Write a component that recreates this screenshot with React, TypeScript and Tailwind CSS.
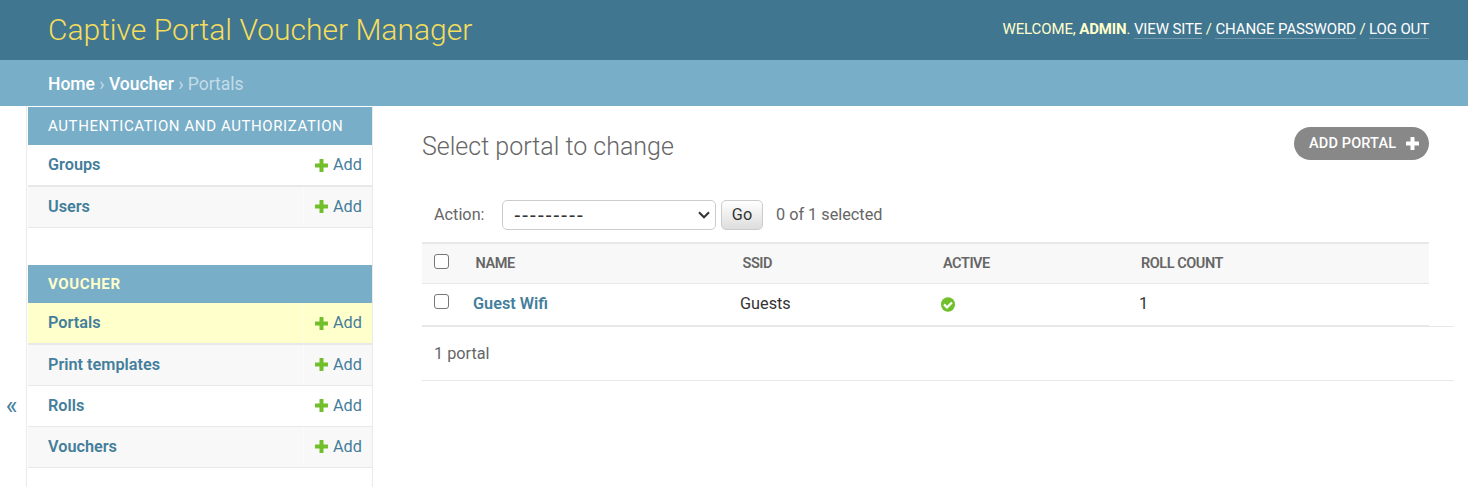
function PlusIcon({ className }: { className: string }) {
  return (
    <svg viewBox="0 0 13 13" className={className} fill="currentColor" aria-hidden="true">
      <path d="M5 0h3a.5.5 0 0 1 .5.500V4.500H12.500a.5.5 0 0 1 .5.500V8a.5.5 0 0 1-.5.500H8.500V12.500a.5.5 0 0 1-.5.500H5a.5.5 0 0 1-.5-.5V8.500H.5A.5.5 0 0 1 0 8V5a.5.5 0 0 1 .5-.5H4.500V.5A.5.5 0 0 1 5 0z" />
    </svg>
  );
}

type Model = { name: string; current?: boolean };

function AppModule({ caption, current, models }: { caption: string; current?: boolean; models: Model[] }) {
  return (
    <section>
      <h2
        className={
          "flex h-[38px] items-center bg-[#79aec8] pl-5 text-[15px] tracking-[0.6px] uppercase " +
          (current ? "font-bold text-[#ffffcc]" : "font-normal text-white")
        }
      >
        {caption}
      </h2>
      <ul>
        {models.map((m, i) => (
          <li
            key={m.name}
            className={
              "flex border-[#e8e8e8] text-[16.25px] text-[#447e9b] " +
              (i === 0 ? "h-[42px] border-b-2 " : "h-[41px] border-b ") +
              (m.current ? "bg-[#ffffcc]" : i % 2 ? "bg-[#f8f8f8]" : "bg-white")
            }
          >
            <a className="flex flex-1 items-center pt-px pl-5 font-semibold">{m.name}</a>
            <a className="flex w-[69px] items-center border-l border-white/40 pt-px pl-[11px]">
              <PlusIcon className={"mr-[5px] h-[13px] w-[13px] text-[#70bf2b] " + (i === 0 ? "-mt-px" : "-mt-[2px]")} />
              Add
            </a>
          </li>
        ))}
      </ul>
    </section>
  );
}

function Checkbox() {
  return <span className="block h-[15px] w-[15px] rounded-[3px] border border-[#767676] bg-white" />;
}

function UserLink({ children }: { children: string }) {
  return <a className="border-b border-white/25 text-white">{children}</a>;
}

export default function App() {
  return (
    <div className="flex h-[487px] w-[1468px] flex-col overflow-hidden bg-white font-['Roboto',sans-serif] text-[#333333]">
      <header className="flex h-[60px] shrink-0 items-center justify-between bg-[#417690] pr-[39px] pl-12">
        <h1 className="text-[30px] leading-[36px] font-light text-[#f5dd5d]">Captive Portal Voucher Manager</h1>
        <div className="pb-px text-[15px] leading-[17px] tracking-[-0.13px] text-[#ffffcc]">
          WELCOME, <strong className="font-bold">ADMIN</strong>. <UserLink>VIEW SITE</UserLink> /{" "}
          <UserLink>CHANGE PASSWORD</UserLink> / <UserLink>LOG OUT</UserLink>
        </div>
      </header>
      <nav className="flex h-[46px] shrink-0 items-center bg-[#79aec8] pt-0.5 pl-12 text-[17.5px] whitespace-pre text-[#c4dce8]">
        <a className="font-medium text-white">Home</a> › <a className="font-medium text-white">Voucher</a> › Portals
      </nav>
      <div className="flex flex-1">
        <button className="flex w-[27px] items-center justify-center border-r border-[#eaeaea] pt-[219px] pr-[3px] text-[25px] text-[#447e9b]">
          «
        </button>
        <aside className="flex w-[346px] flex-col gap-[37px] border-r border-[#eaeaea] pt-px pl-px">
          <AppModule caption="Authentication and Authorization" models={[{ name: "Groups" }, { name: "Users" }]} />
          <AppModule
            caption="Voucher"
            current
            models={[
              { name: "Portals", current: true },
              { name: "Print templates" },
              { name: "Rolls" },
              { name: "Vouchers" },
            ]}
          />
        </aside>
        <main className="flex flex-1 flex-col pl-[49px]">
          <div className="flex justify-between pt-[21px] pr-[39px]">
            <h1 className="pt-[5px] text-[25px] leading-[30px] font-light text-[#666666]">Select portal to change</h1>
            <a className="flex h-[33px] w-[135px] items-center rounded-full bg-[#888888] pl-[15px] text-[14.5px] font-medium tracking-[0.15px] text-white">
              ADD PORTAL
              <PlusIcon className="ml-[10px] h-[13px] w-[13px]" />
            </a>
          </div>
          <div className="mt-[38px] flex h-[31px] items-center pb-px pl-3 text-[16.25px] text-[#666666]">
            <span className="w-[68px] pt-px">Action:</span>
            <div className="flex h-[30px] w-[214px] items-center justify-between rounded-[5px] border border-[#cccccc] bg-white pr-[5px] pl-[11px] text-[#333333]">
              <span className="font-['Liberation_Sans',sans-serif] text-[20px] leading-5 tracking-[1.15px]">---------</span>
              <svg viewBox="0 0 12 8" className="h-2 w-3" fill="none" stroke="currentColor" strokeWidth="2">
                <path d="M1 1.300L6 6.300L11 1.300" />
              </svg>
            </div>
            <button className="ml-[5px] h-[30px] w-[42px] rounded-[5px] border border-[#cccccc] bg-linear-to-b from-white to-[#dddddd] pt-px text-[#333333]">
              Go
            </button>
            <span className="ml-[13px] pt-px">0 of 1 selected</span>
          </div>
          <div className="mt-[11px] mr-[39px] grid grid-cols-[51px_267px_200px_199px_290px] border-t-2 border-[#e8e8e8]">
            <div className="col-span-5 grid h-10 grid-cols-subgrid items-center border-b border-[#e8e8e8] bg-[#f8f8f8] pt-px text-[14.5px] font-semibold tracking-[-0.45px] text-[#666666]">
              <div className="-mt-[5px] pl-3"><Checkbox /></div>
              <div className="pl-[2.5px]">NAME</div>
              <div className="pl-[2.5px]">SSID</div>
              <div className="pl-[3px]">ACTIVE</div>
              <div className="pl-[2px]">ROLL COUNT</div>
            </div>
            <div className="col-span-5 grid h-[42px] grid-cols-subgrid items-center border-b border-[#e8e8e8] pb-px text-[16.25px]">
              <div className="-mt-[5px] pl-3"><Checkbox /></div>
              <a className="font-semibold text-[#447e9b]">Guest Wifi</a>
              <div>Guests</div>
              <div className="pl-px">
                <svg viewBox="0 0 14 15" className="h-[15px] w-[14px]" aria-hidden="true">
                  <ellipse cx="7" cy="7.5" rx="7" ry="7.300" fill="#70bf2b" />
                  <path d="M3 7.400L6 10.300L11 5.500" fill="none" stroke="#fff" strokeWidth="2.300" />
                </svg>
              </div>
              <div>1</div>
            </div>
          </div>
          <div className="flex w-[1032px] flex-col">
            <div className="h-px bg-[#e8e8e8]" />
            <div className="flex h-[54px] items-center border-b border-[#e8e8e8] pt-0.5 pl-3 text-[16.25px] text-[#666666]">1 portal</div>
          </div>
        </main>
      </div>
    </div>
  );
}
